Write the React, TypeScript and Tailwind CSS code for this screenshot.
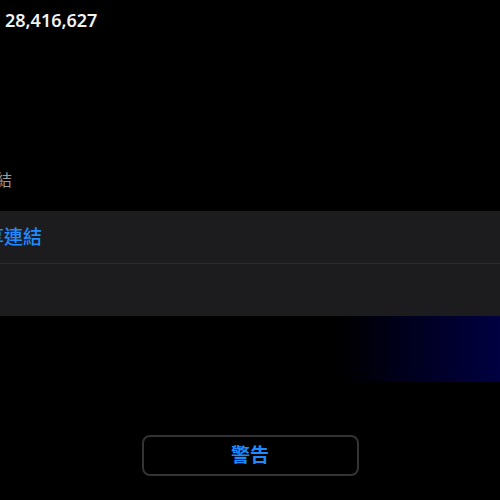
import React from 'react'

const font = { fontFamily: '"Noto Sans", "Noto Sans CJK TC", sans-serif' }

const App = () => {
  return (
    <div
      className="w-[500px] h-[500px] bg-black overflow-hidden flex flex-col"
      style={font}
    >
      {/* total count */}
      <div className="pt-[9px] px-[5px] text-[18px] leading-[22px] font-semibold text-[#f2f2f2]">
        28,416,627
      </div>

      {/* section label (cut off on the left) */}
      <div className="mt-[137px] -ml-[20px] text-[16px] leading-[24px] text-[#9b9b9b] whitespace-nowrap">
        連結
      </div>

      {/* list panel */}
      <div className="mt-[19px] bg-[#1c1c1f] flex flex-col">
        <div className="h-[52px] flex items-center -ml-[15px] text-[19px] font-medium text-[#1e8bff] whitespace-nowrap">
          享連結
        </div>
        <div className="h-px bg-[#2a2a2e]" />
        <div className="h-[52px]" />
      </div>

      {/* glow strip */}
      <div className="self-end w-[205px] h-[66px] bg-gradient-to-r from-black via-[#00001a] to-[#000042]" />

      {/* action */}
      <div className="mt-[53px] flex justify-center">
        <button className="w-[217px] h-[41px] rounded-[8px] border-2 border-[#333336] text-[19px] font-bold text-[#1e8bff]">
          警告
        </button>
      </div>
    </div>
  )
}

export default App
